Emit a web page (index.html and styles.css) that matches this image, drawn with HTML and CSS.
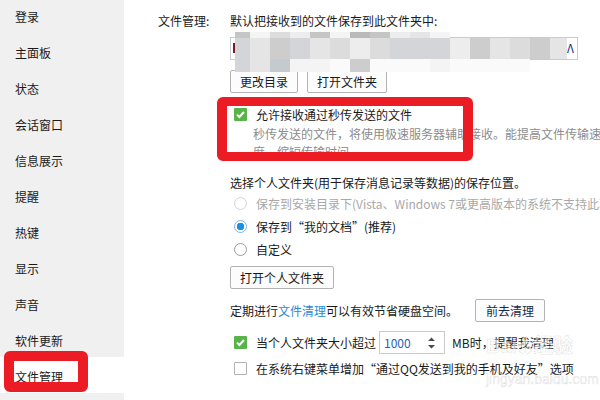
FILE: index.html
```html
<!DOCTYPE html>
<html lang="zh">
<head>
    <meta charset="UTF-8">
    <title>文件管理</title>
    <link rel="stylesheet" href="styles.css">
</head>
<body>
    <!-- 左侧设置分类 -->
    <div class="sidebar">
        <ul class="nav">
            <li>登录</li>
            <li>主面板</li>
            <li>状态</li>
            <li>会话窗口</li>
            <li>信息展示</li>
            <li>提醒</li>
            <li>热键</li>
            <li>显示</li>
            <li>声音</li>
            <li>软件更新</li>
            <li class="current">文件管理</li>
        </ul>
    </div>

    <div class="main">
        <div class="section">
            <div class="section-label">文件管理:</div>
            <div class="section-body">
                <div class="line">默认把接收到的文件保存到此文件夹中:</div>
                <div class="path-box">
                    <span class="caret-mark"></span>
                    <span class="path-end">Λ</span>
                    <!-- 打码区域 -->
                    <div class="mosaic">
                        <i class="s2"></i><i class="s8"></i><i class="s5"></i><i class="s7"></i><i class="s2"></i><i class="s8"></i><i class="s1"></i><i class="s2"></i><i class="s7"></i><i class="s6"></i><i class="s8"></i><i></i><i></i><i></i><i></i><i></i><i></i>
                        <i class="s4"></i><i class="s6"></i><i class="s3"></i><i class="s4"></i><i class="s6"></i><i class="s5"></i><i class="s7"></i><i class="s5"></i><i class="s4"></i><i class="s4"></i><i class="s4"></i><i class="s7"></i><i class="s3"></i><i class="s6"></i><i class="s5"></i><i class="s3"></i><i class="s6"></i>
                        <i class="s4"></i><i class="s6"></i><i class="s3b"></i><i class="s8"></i><i class="s8"></i><i class="s9"></i><i class="s3"></i><i class="s9"></i><i class="s9"></i><i class="s9"></i><i class="s8"></i><i class="s9"></i><i class="s9"></i><i class="s9"></i><i class="s9"></i><i></i><i></i>
                    </div>
                </div>
                <div class="btn-row">
                    <button class="btn">更改目录</button>
                    <button class="btn">打开文件夹</button>
                </div>

                <div class="check-row">
                    <span class="checkbox checked"><svg width="13" height="13" viewBox="0 0 13 13"><path d="M3 6.6 L5.4 9 L10 4" fill="none" stroke="#fff" stroke-width="2"/></svg></span>
                    允许接收通过秒传发送的文件
                </div>
                <div class="desc">秒传发送的文件，将使用极速服务器辅助接收。能提高文件传输速度，缩短传输时间。</div>

                <div class="line choose">选择个人文件夹(用于保存消息记录等数据)的保存位置。</div>
                <div class="radio-row disabled"><span class="radio"></span>保存到安装目录下(Vista、Windows 7或更高版本的系统不支持此功能)</div>
                <div class="radio-row"><span class="radio selected"></span>保存到“我的文档”(推荐)</div>
                <div class="radio-row"><span class="radio"></span>自定义</div>
                <button class="btn btn-personal">打开个人文件夹</button>

                <div class="clean-row">
                    定期进行<a class="link">文件清理</a>可以有效节省硬盘空间。
                    <button class="btn btn-clean">前去清理</button>
                </div>

                <div class="limit-row">
                    <span class="checkbox checked"><svg width="13" height="13" viewBox="0 0 13 13"><path d="M3 6.6 L5.4 9 L10 4" fill="none" stroke="#fff" stroke-width="2"/></svg></span>
                    当个人文件夹大小超过
                    <div class="spinner">
                        <span class="spin-value">1000</span>
                        <svg class="spin-arrows" width="9" height="14" viewBox="0 0 9 14"><path d="M1 5 L4.5 1.5 L8 5 Z M1 9 L4.5 12.5 L8 9 Z" fill="#4a4a4a"/></svg>
                    </div>
                    <span class="unit">MB时，提醒我清理</span>
                </div>

                <div class="menu-row">
                    <span class="checkbox"></span>
                    在系统右键菜单增加“通过QQ发送到我的手机及好友”选项
                </div>
            </div>
        </div>
    </div>

    <!-- 红框标注 -->
    <div class="mark mark-nav"></div>
    <div class="mark mark-option"></div>

    <div class="watermark">
        <div class="wm-logo">Bai<span class="wm-paw">✿</span>经验</div>
        <div class="wm-url">jingyan.baidu.com</div>
    </div>
</body>
</html>
```

FILE: styles.css
```css
body {
    margin: 0;
    width: 600px;
    height: 400px;
    overflow: hidden;
    display: flex;
    position: relative;
    font-family: "Noto Sans CJK SC", "Microsoft YaHei", sans-serif;
    font-size: 12px;
    color: #1a1a1a;
    background: #fff;
}
.sidebar {
    width: 124px;
    flex-shrink: 0;
    background-color: #f0f0f0;
}
.nav {
    list-style: none;
    margin: -3px 0 0 0;
    padding: 0;
}
.nav li {
    height: 36px;
    line-height: 39px;
    padding-left: 15px;
}
.nav .current {
    background-color: #fff;
}
.main {
    flex: 1;
    min-width: 0;
    overflow: hidden;
    padding: 12px 0 0 34px;
}
.section {
    display: flex;
}
.section-label {
    width: 72px;
    flex-shrink: 0;
    line-height: 18px;
}
.section-body {
    flex: 1;
    min-width: 0;
}
.line {
    line-height: 18px;
    white-space: nowrap;
}
.path-box {
    position: relative;
    margin-top: 7px;
    width: 348px;
    height: 23px;
    box-sizing: border-box;
    border: 1px solid #cbcbcb;
}
.caret-mark {
    position: absolute;
    left: 2px;
    top: 5px;
    width: 3px;
    height: 10px;
    background: #7a1a22;
}
.path-end {
    position: absolute;
    right: 3px;
    top: 1px;
    line-height: 18px;
    font-size: 12px;
    color: #233a7a;
}
.mosaic {
    position: absolute;
    left: 4px;
    top: -6px;
    display: grid;
    grid-template-columns: 15px repeat(15, 20px) 17px;
    grid-template-rows: 6px 21px 13px;
}
.s1 { background: #b9b9b9; }
.s2 { background: #c5c5c5; }
.s3 { background: #cdcdcd; }
.s3b { background: #c4cace; }
.s4 { background: #d4d5d8; }
.s5 { background: #dcdcdc; }
.s6 { background: #e5e5e5; }
.s7 { background: #ededed; }
.s8 { background: #f4f4f4; }
.s9 { background: #fafafa; }
.btn-row {
    display: flex;
    gap: 9px;
    margin-top: 10px;
}
.btn {
    height: 23px;
    padding: 0 9px;
    box-sizing: border-box;
    border: 1px solid #b3b3b3;
    border-radius: 2px;
    background: #fcfcfc;
    font-family: inherit;
    font-size: 12px;
    color: #1a1a1a;
    line-height: 21px;
}
.check-row {
    display: flex;
    align-items: center;
    height: 18px;
    margin-top: 12px;
    padding-left: 4px;
}
.checkbox {
    width: 13px;
    height: 13px;
    box-sizing: border-box;
    border: 1px solid #b0b0b0;
    border-radius: 1px;
    background: #fff;
    margin-right: 9px;
    flex-shrink: 0;
    display: flex;
}
.checkbox.checked {
    border: none;
    background: #58b348;
}
.desc {
    margin-top: 2px;
    padding-left: 23px;
    width: 352px;
    line-height: 18px;
    color: #8c8c8c;
}
.choose {
    margin-top: 13px;
}
.radio-row {
    display: flex;
    align-items: center;
    height: 23px;
    padding-left: 4px;
    white-space: nowrap;
}
.radio {
    width: 13px;
    height: 13px;
    box-sizing: border-box;
    border: 1px solid #9c9c9c;
    border-radius: 50%;
    margin-right: 9px;
    flex-shrink: 0;
    background: #fff;
}
.radio.selected {
    border-color: #7fb4e4;
    background: radial-gradient(circle, #1a8fe6 0 3.5px, #fff 4px);
}
.radio-row.disabled {
    color: #a8a8a8;
}
.radio-row.disabled .radio {
    border-color: #d4d4d4;
}
.btn-personal {
    margin-top: 5px;
}
.clean-row {
    display: flex;
    align-items: center;
    height: 23px;
    margin-top: 10px;
    white-space: nowrap;
}
.link {
    color: #2a88d4;
}
.btn-clean {
    margin-left: 17px;
    padding: 0 10px;
    color: #1b2a44;
}
.limit-row {
    display: flex;
    align-items: center;
    height: 23px;
    margin-top: 9px;
    padding-left: 4px;
    white-space: nowrap;
}
.spinner {
    display: flex;
    align-items: center;
    justify-content: space-between;
    width: 66px;
    height: 23px;
    box-sizing: border-box;
    margin-left: 3px;
    padding: 0 8px 0 4px;
    border: 1px solid #cbcbcb;
}
.spin-value {
    color: #1e5fb8;
}
.unit {
    margin-left: 7px;
}
.menu-row {
    display: flex;
    align-items: center;
    height: 23px;
    margin-top: 3px;
    padding-left: 4px;
    white-space: nowrap;
}
/* 截图上的红框标注 */
.mark {
    position: absolute;
    box-sizing: border-box;
    border: 10px solid #ec1c24;
    border-radius: 6px;
}
.mark-nav {
    left: 4px;
    top: 351px;
    width: 84px;
    height: 41px;
}
.mark-option {
    left: 217px;
    top: 97px;
    width: 256px;
    height: 64px;
    border-width: 9px 10px;
}
.watermark {
    position: absolute;
    left: 486px;
    top: 334px;
    color: rgba(255, 255, 255, 0.6);
    -webkit-text-stroke: 0.6px rgba(0, 0, 0, 0.14);
    font-family: "Liberation Sans", "Noto Sans CJK SC", sans-serif;
}
.wm-logo {
    font-size: 20px;
    font-weight: bold;
    line-height: 24px;
}
.wm-paw {
    font-size: 16px;
}
.wm-url {
    font-size: 14px;
    line-height: 18px;
    margin-top: 10px;
}
```
